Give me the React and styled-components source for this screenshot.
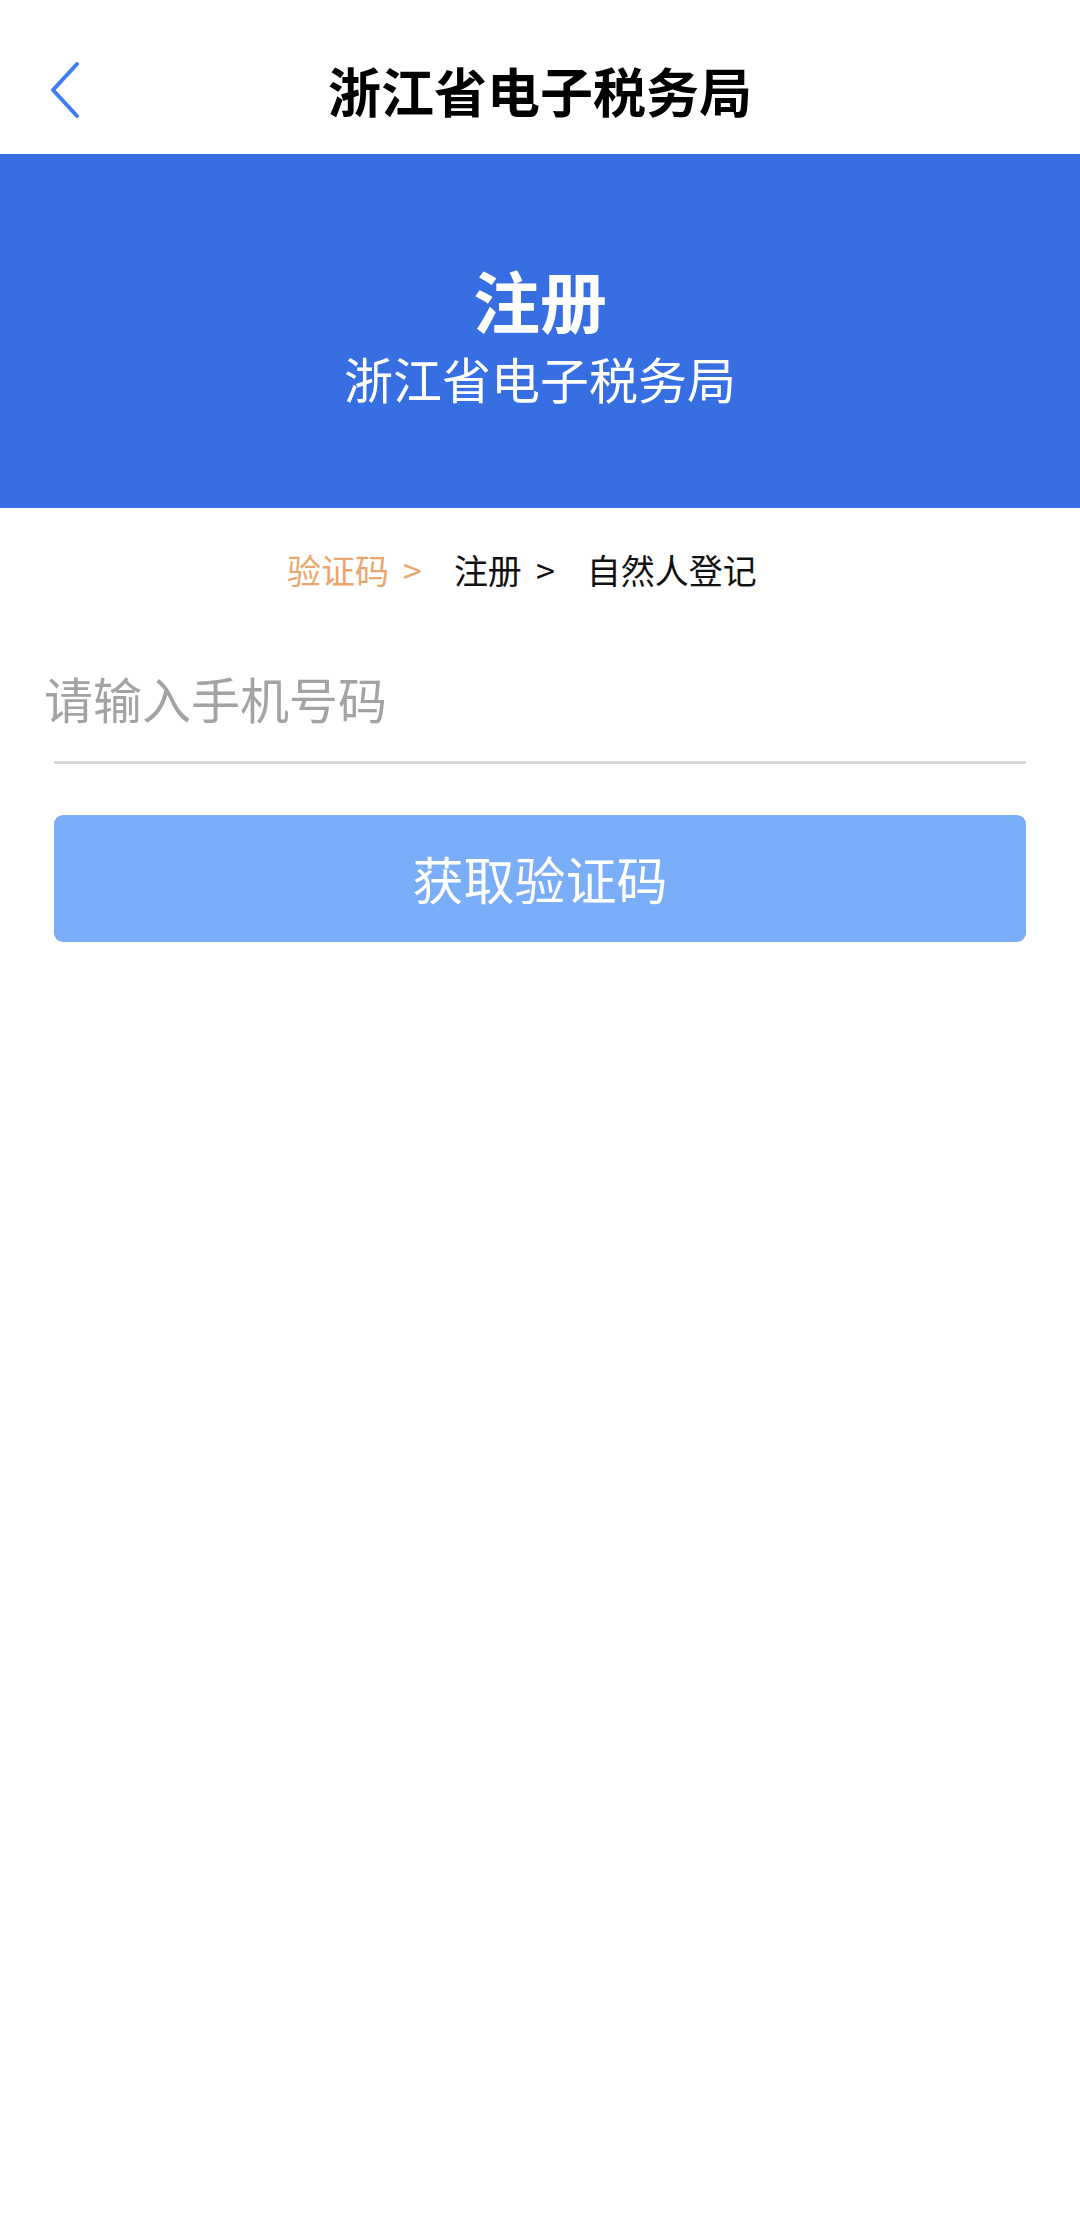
import React from 'react'
import styled, {createGlobalStyle} from 'styled-components'

const GlobalStyle = createGlobalStyle`
  html, body {
    margin: 0;
    padding: 0;
    background: #ffffff;
  }
  body {
    font-family: "Noto Sans CJK SC", "Noto Sans", sans-serif;
  }
`

const Page = styled.div`
  width: 1080px;
  min-height: 2239px;
  background: #ffffff;
`

const Header = styled.header`
  display: grid;
  grid-template-columns: 1fr auto 1fr;
  align-items: center;
  height: 128px;
  padding-top: 26px;
`

const BackButton = styled.button`
  justify-self: start;
  display: flex;
  align-items: center;
  margin-left: 46px;
  padding: 0;
  border: none;
  background: transparent;
  cursor: pointer;
`

const HeaderTitle = styled.h1`
  margin: 0;
  font-size: 53px;
  line-height: 1;
  font-weight: 700;
  color: #000000;
  letter-spacing: 0;
`

const Banner = styled.section`
  display: flex;
  flex-direction: column;
  align-items: center;
  height: 354px;
  box-sizing: border-box;
  padding-top: 111px;
  background: #376fe2;
  color: #ffffff;
`

const BannerTitle = styled.h2`
  margin: 0;
  font-size: 67px;
  line-height: 1;
  font-weight: 700;
`

const BannerSub = styled.p`
  margin: 21px 0 0;
  font-size: 49px;
  line-height: 1;
  font-weight: 400;
`

const Steps = styled.nav`
  display: flex;
  align-items: center;
  padding: 45px 0 0 287px;
  font-size: 34px;
  line-height: 34px;
`

const Step = styled.span`
  color: ${props => (props.active ? '#eba66d' : '#111111')};
`

const Sep = styled.span`
  margin: 0 32px 0 14px;
  color: ${props => (props.active ? '#eba66d' : '#111111')};
`

const Field = styled.div`
  margin: 70px 54px 0;
  padding-bottom: 24px;
  border-bottom: 3px solid #d8d8d8;
`

const Input = styled.input`
  display: block;
  width: calc(100% + 10px);
  height: 80px;
  margin-left: -10px;
  padding: 0;
  border: none;
  outline: none;
  background: transparent;
  font-family: inherit;
  font-size: 49px;
  color: #333333;

  &::placeholder {
    color: #a3a3a3;
  }
`

const SubmitButton = styled.button`
  display: block;
  width: calc(100% - 108px);
  height: 127px;
  margin: 51px 54px 0;
  border: none;
  border-radius: 9px;
  background: #7aaef8;
  color: #ffffff;
  font-family: inherit;
  font-size: 51px;
  line-height: 1;
  cursor: pointer;
`

const ChevronLeft = () =>
  <svg width="36" height="58" viewBox="0 0 36 58" fill="none">
    <polyline
      points="31,3 7,29 31,55"
      stroke="#3d7cf1"
      strokeWidth="4"
      strokeLinecap="round"
      strokeLinejoin="round"
    />
  </svg>

const App = () =>
  <Page>
    <GlobalStyle />
    <Header>
      <BackButton aria-label="返回">
        <ChevronLeft />
      </BackButton>
      <HeaderTitle>浙江省电子税务局</HeaderTitle>
      <span />
    </Header>
    <Banner>
      <BannerTitle>注册</BannerTitle>
      <BannerSub>浙江省电子税务局</BannerSub>
    </Banner>
    <Steps>
      <Step active>验证码</Step>
      <Sep active>&gt;</Sep>
      <Step>注册</Step>
      <Sep>&gt;</Sep>
      <Step>自然人登记</Step>
    </Steps>
    <Field>
      <Input type="tel" placeholder="请输入手机号码" />
    </Field>
    <SubmitButton>获取验证码</SubmitButton>
  </Page>

export default App
